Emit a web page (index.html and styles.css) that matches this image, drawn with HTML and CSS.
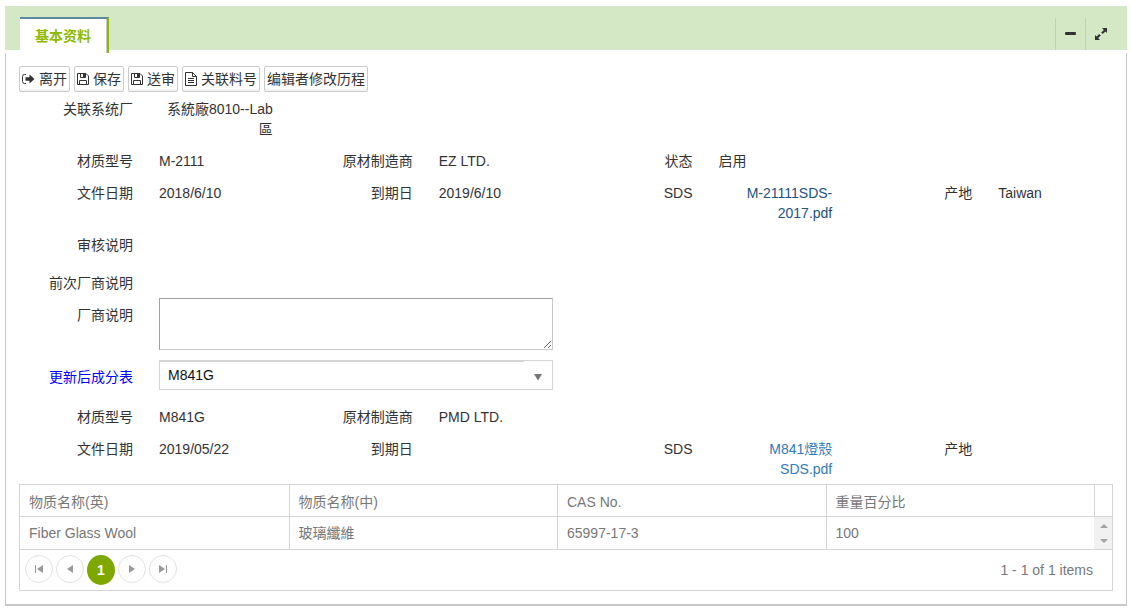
FILE: index.html
```html
<!DOCTYPE html>
<html lang="zh-CN">
<head>
<meta charset="utf-8">
<title>基本资料</title>
<link rel="stylesheet" href="styles.css">
</head>
<body>
<main class="panel">
  <header class="panel-head">
    <button class="tab" type="button">基本资料</button>
    <div class="tools">
      <button class="tool" type="button" aria-label="收起"><svg width="14" height="14" viewBox="0 0 14 14"><rect x="1" y="5" width="11" height="3" rx="1" fill="#333"/></svg></button>
      <button class="tool" type="button" aria-label="展开"><svg width="14" height="14" viewBox="0 0 14 14"><path d="M8 1h5v5l-1.600-1.600-2.700 2.700-1.500-1.500 2.700-2.700zM6 13H1V8l1.600 1.600 2.700-2.700 1.500 1.500-2.700 2.700z" fill="#333"/></svg></button>
    </div>
  </header>
  <div class="panel-body">
    <div class="toolbar">
      <button class="btn" type="button"><svg width="13" height="14" viewBox="0 0 13 14"><path d="M4 2.500H2.500a2 2 0 0 0-2 2v5a2 2 0 0 0 2 2H4" fill="none" stroke="#333"/><path d="M3.500 5.200h4V2.500L12.500 7l-5 4.500V8.800h-4z" fill="#333"/></svg>离开</button>
      <button class="btn" type="button"><svg width="12" height="14" viewBox="0 0 12 14"><path d="M.5 1.500h8.500l2.500 2.500v8.500H.5zM3.500 1.500v4h5v-4M2.500 12.500v-4h7v4" fill="none" stroke="#333"/><path d="M6 2h2v3H6z" fill="#333"/></svg>保存</button>
      <button class="btn" type="button"><svg width="12" height="14" viewBox="0 0 12 14"><path d="M.5 1.500h8.500l2.500 2.500v8.500H.5zM3.500 1.500v4h5v-4M2.500 12.500v-4h7v4" fill="none" stroke="#333"/><path d="M6 2h2v3H6z" fill="#333"/></svg>送审</button>
      <button class="btn" type="button"><svg width="12" height="14" viewBox="0 0 12 14"><path d="M.5.500H7.500l4 4v9H.5zM7.500.5v4h4M3 6.500h6M3 8.500h6M3 10.500h6" fill="none" stroke="#333"/></svg>关联料号</button>
      <button class="btn" type="button">编辑者修改历程</button>
    </div>
    <div class="form">
      <div class="row"><div class="field"><span class="label">关联系统厂</span><span class="value right">系統廠8010--Lab區</span></div></div>
      <div class="row">
        <div class="field"><span class="label">材质型号</span><span class="value">M-2111</span></div>
        <div class="field"><span class="label">原材制造商</span><span class="value">EZ LTD.</span></div>
        <div class="field"><span class="label">状态</span><span class="value">启用</span></div>
      </div>
      <div class="row">
        <div class="field"><span class="label">文件日期</span><span class="value">2018/6/10</span></div>
        <div class="field"><span class="label">到期日</span><span class="value">2019/6/10</span></div>
        <div class="field"><span class="label">SDS</span><span class="value right"><a class="link visited" href="#">M-21111SDS-2017.pdf</a></span></div>
        <div class="field"><span class="label">产地</span><span class="value">Taiwan</span></div>
      </div>
      <div class="row tall"><div class="field"><span class="label">审核说明</span></div></div>
      <div class="row"><div class="field"><span class="label">前次厂商说明</span></div></div>
      <div class="row">
        <div class="field double">
          <label class="label" for="note">厂商说明</label>
          <textarea class="note" id="note"></textarea>
        </div>
      </div>
      <div class="row">
        <div class="field double">
          <label class="label blue" for="part">更新后成分表</label>
          <div class="select-wrap">
            <select class="select" id="part"><option>M841G</option></select>
            <svg class="caret" width="10" height="8" viewBox="0 0 10 8"><path d="M1 1h8L5 7.500z" fill="#777"/></svg>
          </div>
        </div>
      </div>
      <div class="row">
        <div class="field"><span class="label">材质型号</span><span class="value">M841G</span></div>
        <div class="field"><span class="label">原材制造商</span><span class="value">PMD LTD.</span></div>
      </div>
      <div class="row">
        <div class="field"><span class="label">文件日期</span><span class="value">2019/05/22</span></div>
        <div class="field"><span class="label">到期日</span></div>
        <div class="field"><span class="label">SDS</span><span class="value right"><a class="link" href="#">M841燈殼SDS.pdf</a></span></div>
        <div class="field"><span class="label">产地</span></div>
      </div>
    </div>
    <div class="grid">
      <table class="table">
        <colgroup><col><col><col><col><col class="col-scroll"></colgroup>
        <thead><tr><th>物质名称(英)</th><th>物质名称(中)</th><th>CAS No.</th><th>重量百分比</th><th></th></tr></thead>
        <tbody><tr><td>Fiber Glass Wool</td><td>玻璃纖維</td><td>65997-17-3</td><td>100</td>
          <td class="scroll"><div class="arrows">
            <svg width="8" height="4" viewBox="0 0 8 4"><path d="M0 4l4-4 4 4z" fill="#a3a3a3"/></svg>
            <svg width="8" height="4" viewBox="0 0 8 4"><path d="M0 0l4 4 4-4z" fill="#a3a3a3"/></svg>
          </div></td></tr></tbody>
      </table>
      <footer class="pager">
        <nav class="pages">
          <button class="page" type="button" aria-label="首页"><svg width="8" height="8" viewBox="0 0 8 8"><path d="M0 0h1v8H0zM8 0v8L2 4z" fill="#999"/></svg></button>
          <button class="page" type="button" aria-label="上一页"><svg width="8" height="8" viewBox="0 0 8 8"><path d="M7 0v8L1 4z" fill="#999"/></svg></button>
          <button class="page current" type="button">1</button>
          <button class="page" type="button" aria-label="下一页"><svg width="8" height="8" viewBox="0 0 8 8"><path d="M1 0v8l6-4z" fill="#999"/></svg></button>
          <button class="page" type="button" aria-label="末页"><svg width="8" height="8" viewBox="0 0 8 8"><path d="M7 0h1v8H7zM0 0v8l6-4z" fill="#999"/></svg></button>
        </nav>
        <span class="count">1 - 1 of 1 items</span>
      </footer>
    </div>
  </div>
</main>
</body>
</html>
```
FILE: styles.css
```css
* { box-sizing: border-box; }

body {
  margin: 0;
  padding: 6px 3px 0 5px;
  background: #fff;
  color: #333;
  font: 14px/20px "Liberation Sans", "Noto Sans CJK SC", sans-serif;
}

button, select, textarea { font: inherit; color: inherit; }

.panel-head {
  display: flex;
  justify-content: space-between;
  height: 47px;
  border-bottom: 3px solid #fff;
  background: #d5e8c6;
  background-clip: padding-box;
}

.tab {
  height: 36px;
  margin: 11px 0 0 15px;
  padding: 0 16px 0 15px;
  border: 0;
  border-top: 2px solid #5a8a9f;
  border-right: 2px solid #8fb900;
  background: #fff;
  box-shadow: inset -1px 0 #c8c8c8;
  color: #8fb900;
  font-weight: bold;
}

.tools {
  display: flex;
  padding-top: 12px;
  margin-right: 12px;
}

.tool {
  display: flex;
  align-items: center;
  justify-content: center;
  width: 30px;
  padding: 0;
  border: 0;
  border-left: 1px solid #bfd2b3;
  background: none;
}

.panel-body {
  padding: 13px;
  border: 1px solid #c8c8c8;
  border-top: 0;
  border-bottom-width: 2px;
}

.toolbar { display: flex; gap: 4px; }

.btn {
  display: flex;
  align-items: center;
  gap: 4px;
  height: 26px;
  padding: 0 2px;
  border: 1px solid #ccc;
  border-radius: 2px;
  background: linear-gradient(#fff 88%, #eee);
  white-space: nowrap;
}

.form {
  margin: 1px -13px -1px -14px;
  padding-right: 2px;
}

.row {
  display: grid;
  grid-template-columns: repeat(4, 1fr);
  padding-top: 6px;
}

.field {
  display: grid;
  grid-template-columns: 128px 1fr;
  column-gap: 26px;
  align-items: start;
  padding-right: 12px;
  padding-bottom: 6px;
}

.tall .field { padding-bottom: 12px; }

.double {
  grid-column: span 2;
  margin-top: -7px;
  padding: 0 12px 4px 0;
}

.double .label { padding-top: 7px; }

.label { text-align: right; }

.blue { color: #00f; }

.value { overflow-wrap: anywhere; }

.right { text-align: right; }

.link { color: #337ab7; text-decoration: none; }

.visited { color: #23527c; }

.note {
  display: block;
  width: 100%;
  height: 52px;
  margin-bottom: 7px;
  border: 1px solid #c8c8c8;
  border-top-color: #a0a0a0;
  border-left-color: #a0a0a0;
}

.select-wrap { position: relative; }

.select {
  display: block;
  width: 100%;
  height: 30px;
  margin-bottom: 7px;
  padding: 0 28px 0 8px;
  border: 1px solid #d5d5d5;
  border-radius: 0;
  appearance: none;
  background: linear-gradient(to right, #d5d5d5, #d5d5d5) 0 0 / calc(100% - 28px) 1px no-repeat #fff;
  color: #111;
}

.caret {
  position: absolute;
  top: 13px;
  right: 10px;
  pointer-events: none;
}

.grid {
  border: 1px solid #d5d5d5;
  color: #787878;
}

.table {
  width: 100%;
  table-layout: fixed;
  border-spacing: 0;
}

.col-scroll { width: 18px; }

.table th,
.table td {
  height: 33px;
  padding: 0 9px;
  border-bottom: 1px solid #d5d5d5;
  border-left: 1px solid #d5d5d5;
  font-weight: normal;
  text-align: left;
}

.table th { height: 32px; padding-top: 2px; }

.table tr > :first-child { border-left: 0; }

.table .scroll {
  padding: 0;
  border-left-color: #f1f1f1;
  background: #f1f1f1;
}

.arrows {
  display: flex;
  flex-direction: column;
  align-items: center;
  gap: 11px;
}

.pager {
  display: flex;
  align-items: center;
  justify-content: space-between;
  height: 40px;
  padding: 0 19px 0 5px;
}

.pages { display: flex; gap: 3px; }

.page {
  display: flex;
  align-items: center;
  justify-content: center;
  width: 28px;
  height: 28px;
  padding: 0;
  border: 1px solid #e2e2e2;
  border-radius: 50%;
  background: #fff;
}

.current {
  height: 30px;
  border: 0;
  background: #7ea700;
  color: #fff;
  font-weight: bold;
}
```
